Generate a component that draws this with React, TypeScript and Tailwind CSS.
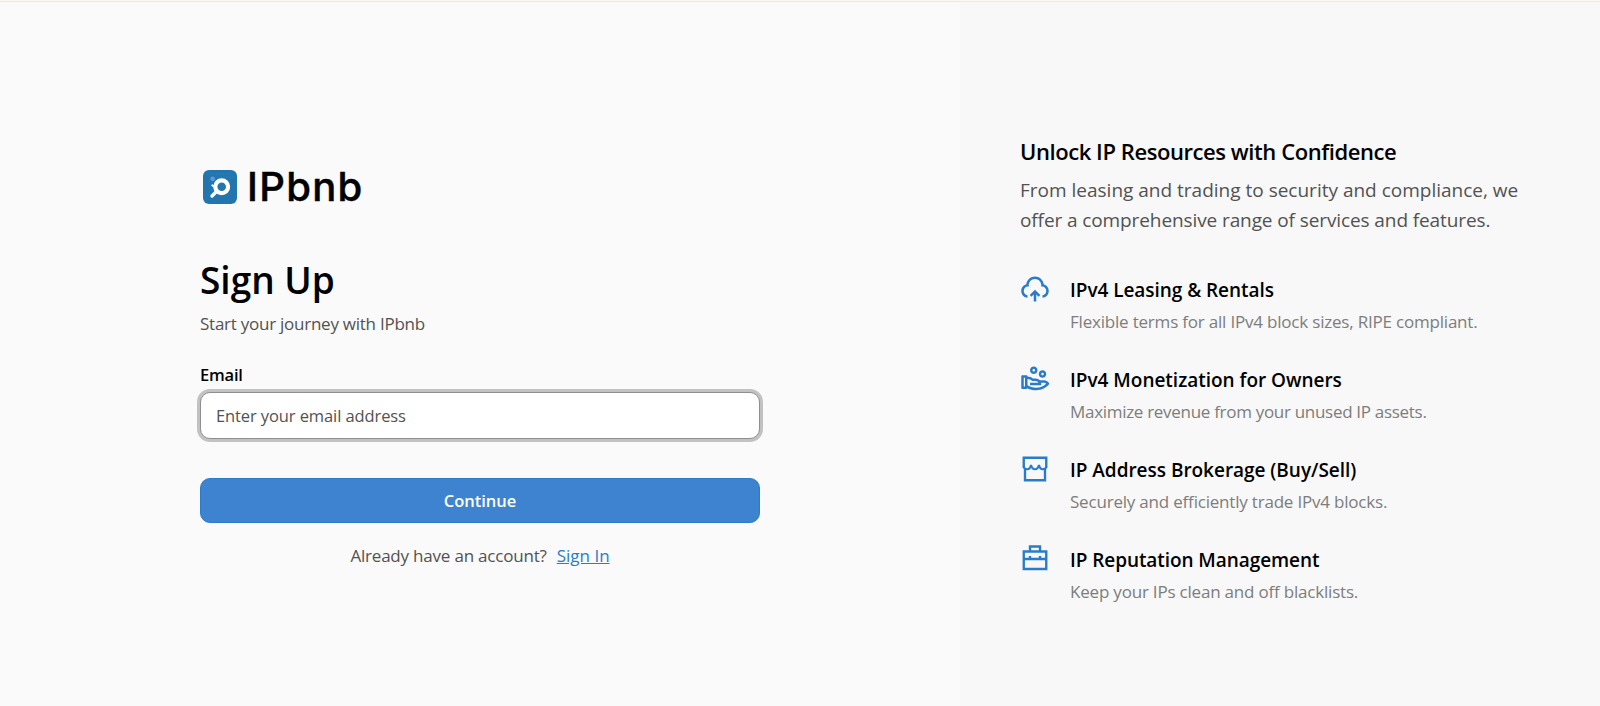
import React from "react";
import { RiUploadCloud2Line, RiHandCoinLine } from "react-icons/ri";

function StoreIcon() {
  return (
    <svg viewBox="0 0 24 24" className="size-[30px]" fill="none" stroke="currentColor" strokeWidth="1.9">
      <path d="M4 12V21H20V12" />
      <path d="M3 11V3H21V11" />
      <path d="M3 10Q3.2 12.2 5.8 12.2Q8.2 12.2 8.8 8.8Q9.6 12.2 12 12.2Q14.4 12.2 15.2 8.8Q15.8 12.2 18.2 12.2Q20.8 12.2 21 10" strokeWidth="1.7" />
    </svg>
  );
}

function CaseIcon() {
  return (
    <svg viewBox="0 0 24 24" className="size-[30px]" fill="none" stroke="currentColor" strokeWidth="1.9">
      <path d="M3 6H21V20H3Z" />
      <path d="M8 6V2H16V6" />
      <path d="M3 12H21M8 9.5V12M16 9.5V12" />
    </svg>
  );
}

function Mark() {
  return (
    <svg viewBox="0 0 34 34" className="size-[34px]" fill="none">
      <rect width="34" height="34" rx="6" fill="#2275ad" />
      <g fill="#3d8cc4">
        {[5, 8, 11, 14, 17, 20, 23, 26, 29].map((x) => (
          <circle key={x} cx={x} cy="4" r="0.5" />
        ))}
        {[18, 21, 24, 27, 30].map((x) => (
          <circle key={x} cx={x} cy="7" r="0.5" />
        ))}
      </g>
      <circle cx="9.7" cy="8.8" r="2.4" fill="#5b98d8" />
      <circle cx="18.7" cy="16.8" r="6.4" stroke="#fff" strokeWidth="4.2" />
      <path d="M14 21L9 26" stroke="#fff" strokeWidth="3.4" strokeLinecap="round" />
      <path d="M9.3 15.4L12 17" stroke="#fff" strokeWidth="2" strokeLinecap="round" />
    </svg>
  );
}

const features = [
  {
    icon: <RiUploadCloud2Line className="size-[30px]" />,
    title: "IPv4 Leasing & Rentals",
    titleClass: "tracking-[-0.05px]",
    text: "Flexible terms for all IPv4 block sizes, RIPE compliant.",
    textClass: "tracking-[-0.2px]",
  },
  {
    icon: <RiHandCoinLine className="size-[30px]" />,
    title: "IPv4 Monetization for Owners",
    titleClass: "tracking-[-0.02px]",
    text: "Maximize revenue from your unused IP assets.",
    textClass: "tracking-[-0.3px]",
  },
  {
    icon: <StoreIcon />,
    title: "IP Address Brokerage (Buy/Sell)",
    titleClass: "tracking-[-0.03px]",
    text: "Securely and efficiently trade IPv4 blocks.",
    textClass: "tracking-[-0.2px]",
  },
  {
    icon: <CaseIcon />,
    title: "IP Reputation Management",
    titleClass: "tracking-[-0.07px]",
    text: "Keep your IPs clean and off blacklists.",
    textClass: "tracking-[-0.2px]",
  },
];

export default function App() {
  return (
    <div className="flex h-[706px] w-full flex-col bg-[#fafafa] font-['Open_Sans',sans-serif]">
      <div className="h-0.5 shrink-0 border-b border-[#f5e3e0] bg-[#fcf6f5]" />
      <div className="flex min-h-0 flex-1">
        <main className="w-[960px] pt-[168px] pl-[200px]">
          <div className="w-[560px]">
            <div className="flex h-[34px] items-center gap-[10px] pl-[3px]">
              <Mark />
              <span className="text-[40px] leading-[34px] font-medium tracking-[1.3px] text-black [-webkit-text-stroke:0.5px_black] [font-family:Inter,sans-serif]">
                IPbnb
              </span>
            </div>
            <h1 className="mt-[56px] text-[37px] leading-10 font-semibold text-black">Sign Up</h1>
            <p className="mt-3 text-[17px] leading-6 tracking-[-0.25px] text-[#525252]">Start your journey with IPbnb</p>
            <label htmlFor="email" className="mt-[27px] block text-[16.5px] leading-6 font-semibold tracking-[-0.2px] text-black">
              Email
            </label>
            <input
              id="email"
              type="email"
              placeholder="Enter your email address"
              className="mt-[5px] block h-[47px] w-full rounded-[10px] border border-[#8f8f8f] bg-white px-[15px] text-[16.5px] tracking-[-0.1px] ring-[3px] ring-[#c2c2c2] outline-none placeholder:text-[#525252]"
            />
            <button className="mt-[39px] block h-[45px] w-full rounded-[10px] border border-[#2a7ccb] bg-[#3d83cf] pt-[2px] text-[16.5px] font-semibold text-white">
              Continue
            </button>
            <p className="mt-[21px] flex justify-center gap-[10px] text-[17px] leading-6 tracking-[-0.2px] text-[#525252]">
              <span>Already have an account?</span>
              <a href="#" className="tracking-normal text-[#2a7ccb] underline">Sign In</a>
            </p>
          </div>
        </main>
        <aside className="flex-1 bg-[#f8f8f8] pt-[134px] pl-[60px]">
          <h2 className="text-[22px] leading-[30px] font-semibold tracking-[-0.43px] text-black">Unlock IP Resources with Confidence</h2>
          <p className="mt-[9px] text-[19px] leading-[30px] text-[#525252]">
            From leasing and trading to security and compliance, we
            <br />
            <span className="tracking-[-0.1px]">offer a comprehensive range of services and features.</span>
          </p>
          <ul className="mt-[39px] flex flex-col gap-[30px]">
            {features.map((f) => (
              <li key={f.title} className="flex h-[60px] gap-5">
                <span className="text-[#2a7ccb]">{f.icon}</span>
                <div className="pt-[2px]">
                  <h3 className={`text-[19px] leading-7 font-semibold whitespace-nowrap text-black ${f.titleClass}`}>{f.title}</h3>
                  <p className={`mt-[6px] text-[17px] leading-6 whitespace-nowrap text-[#7d7d7d] ${f.textClass}`}>{f.text}</p>
                </div>
              </li>
            ))}
          </ul>
        </aside>
      </div>
    </div>
  );
}
